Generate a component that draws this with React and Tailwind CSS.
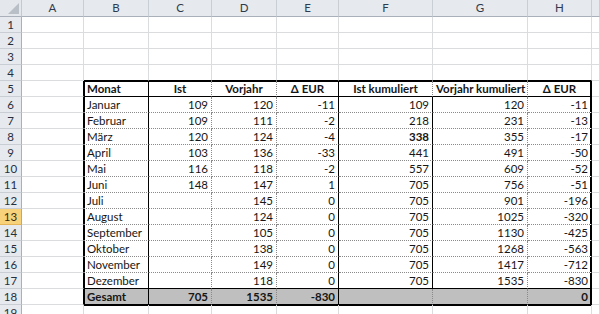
const COLS = ["A", "B", "C", "D", "E", "F", "G", "H", ""];

const rows = [
  ["Januar", 109, 120, -11, 109, 120, -11],
  ["Februar", 109, 111, -2, 218, 231, -13],
  ["März", 120, 124, -4, 338, 355, -17],
  ["April", 103, 136, -33, 441, 491, -50],
  ["Mai", 116, 118, -2, 557, 609, -52],
  ["Juni", 148, 147, 1, 705, 756, -51],
  ["Juli", "", 145, 0, 705, 901, -196],
  ["August", "", 124, 0, 705, 1025, -320],
  ["September", "", 105, 0, 705, 1130, -425],
  ["Oktober", "", 138, 0, 705, 1268, -563],
  ["November", "", 149, 0, 705, 1417, -712],
  ["Dezember", "", 118, 0, 705, 1535, -830],
];

const head = ["Monat", "Ist", "Vorjahr", "Δ EUR", "Ist kumuliert", "Vorjahr kumuliert", "Δ EUR"];
const total = ["Gesamt", 705, 1535, -830, "", "", 0];

const R_SOLID = "border-r-black";
const R_DOT = "border-r-[#8a8a8a] [border-right-style:dotted]";
const R_GRID = "border-r-[#dadcdd]";
const B_SOLID = "border-b-black";
const B_DOT = "border-b-[#8a8a8a] [border-bottom-style:dotted]";
const B_GRID = "border-b-[#dadcdd]";

// table lives in B5:H18 (col index 1..7)
function borders(r, c) {
  const inTable = r >= 5 && r <= 18 && c >= 1 && c <= 7;
  let right = R_GRID;
  let bottom = B_GRID;
  let shadow = "";

  if (inTable) {
    if (c === 1 || c === 4 || c === 7) right = R_SOLID;
    else if (c === 5) right = r >= 6 && r <= 17 ? R_SOLID : R_DOT;
    else right = R_DOT;

    if (r === 5 || r === 17 || r === 18) bottom = B_SOLID;
    else bottom = B_DOT;

    if (r === 5) {
      if (c === 1) shadow = "shadow-[inset_1px_1px_0_#000]";
      else if (c === 7) shadow = "shadow-[inset_-1px_1px_0_#000]";
      else shadow = "shadow-[inset_0_1px_0_#000]";
    } else if (c === 1) shadow = "shadow-[inset_1px_0_0_#000]";
    else if (c === 7) shadow = "shadow-[inset_-1px_0_0_#000]";
  }
  if (r === 4 && c >= 1 && c <= 7) bottom = B_SOLID;
  if (c === 0 && r >= 5 && r <= 18) right = R_SOLID;
  if (r === 19 && c >= 1 && c <= 7) shadow = "shadow-[inset_0_1px_0_#000]";

  return `border-r border-b ${right} ${bottom} ${shadow}`;
}

function cellContent(r, c) {
  if (r === 5) return { text: head[c - 1], bold: true, align: c === 1 ? "text-left" : "text-center" };
  if (r >= 6 && r <= 17) {
    const v = rows[r - 6][c - 1];
    return { text: v, bold: r === 8 && c === 5, align: c === 1 ? "text-left" : "text-right" };
  }
  if (r === 18) return { text: total[c - 1], bold: true, align: c === 1 ? "text-left" : "text-right" };
  return null;
}

function Corner() {
  return (
    <div className="bg-[#e4e7eb] border-r border-b border-r-[#c4c9d0] border-b-[#a9b0ba] flex items-end justify-end p-[2px]">
      <svg width="11" height="11" viewBox="0 0 11 11">
        <polygon points="11,0 11,11 0,11" fill="#b9bfc7" />
      </svg>
    </div>
  );
}

export default function App() {
  const rowNums = Array.from({ length: 19 }, (_, i) => i + 1);

  return (
    <div className="w-[600px] h-[314px] overflow-hidden bg-white font-['Lato','Liberation_Sans',sans-serif] text-[11.5px] text-[#161616]">
      <div className="grid grid-cols-[22px_62px_65px_63px_65px_62px_94px_95px_64px_1fr] grid-rows-[17px_repeat(19,16px)]">
        <Corner />
        {COLS.map((l, i) => (
          <div
            key={l + i}
            className="bg-[#e6e9ed] border-r border-b border-r-[#c9ced5] border-b-[#a9b0ba] text-center leading-[16px] text-[#2f3b4c]"
          >
            {l}
          </div>
        ))}

        {rowNums.map((r) => (
          <div key={r} className="contents">
            <div
              className={
                r === 13
                  ? "bg-[#f8d27a] border-r border-b border-r-[#d9a53e] border-b-[#e6b458] text-center leading-[15px] text-[#3a2c10]"
                  : "bg-[#e6e9ed] border-r border-b border-r-[#a9b0ba] border-b-[#c9ced5] text-center leading-[15px] text-[#26303d]"
              }
            >
              {r}
            </div>
            {COLS.map((_, i) => {
              const c = i;
              const content = c >= 1 && c <= 7 ? cellContent(r, c) : null;
              return (
                <div
                  key={c}
                  className={`${borders(r, c)} ${r === 18 && c >= 1 && c <= 7 ? "bg-[#bfbfbf]" : ""} overflow-hidden whitespace-nowrap px-[3px] leading-[15px]`}
                >
                  {content && (
                    <div className={`${content.align} ${content.bold ? "font-bold" : ""}`}>{content.text}</div>
                  )}
                </div>
              );
            })}
          </div>
        ))}
      </div>
    </div>
  );
}
